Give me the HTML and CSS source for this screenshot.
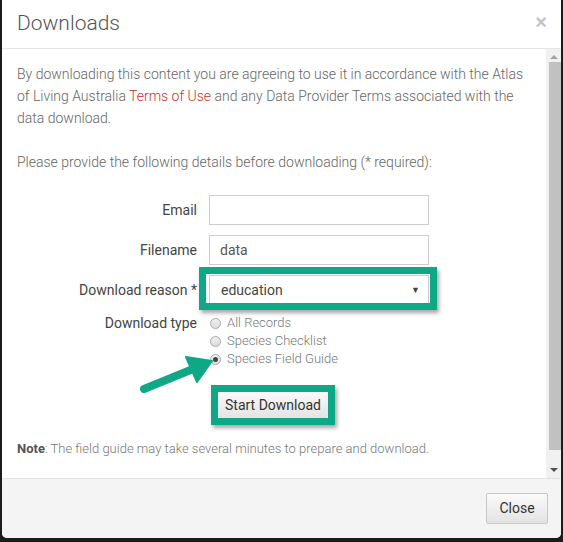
FILE: index.html
```html
<!DOCTYPE html>
<html>
<head>
<meta charset="utf-8">
<link rel="stylesheet" href="styles.css">
</head>
<body>
<div class="modal">
  <div class="modal-header">
    <h4 class="modal-title">Downloads</h4>
    <span class="close">&times;</span>
  </div>
  <div class="modal-middle">
    <div class="modal-body">
      <p class="intro">By downloading this content you are agreeing to use it in accordance with the Atlas of Living Australia <a href="#">Terms of Use</a> and any Data Provider Terms associated with the data download.</p>
      <p class="intro">Please provide the following details before downloading (* required):</p>
      <div class="form">
        <div class="row">
          <label class="lbl">Email</label>
          <div class="field"><input class="input" type="text" value=""></div>
        </div>
        <div class="row">
          <label class="lbl">Filename</label>
          <div class="field"><input class="input" type="text" value="data"></div>
        </div>
        <div class="row">
          <label class="lbl">Download reason *</label>
          <div class="field highlight">
            <div class="select"><span>education</span><span class="caret">&#9660;</span></div>
          </div>
        </div>
        <div class="row row-top">
          <label class="lbl">Download type</label>
          <div class="field radios">
            <div class="radio"><span class="dot"></span>All Records</div>
            <div class="radio"><span class="dot"></span>Species Checklist</div>
            <div class="radio"><span class="dot checked"></span>Species Field Guide</div>
            <svg class="arrow" width="80" height="42" viewBox="0 0 80 42">
              <path d="M5 35 L54 15" stroke="#0fa886" stroke-width="8" stroke-linecap="round" fill="none"/>
              <path d="M73 7 L47 3 L58 28 Z" fill="#0fa886" stroke="#0fa886" stroke-width="2" stroke-linejoin="round"/>
            </svg>
          </div>
        </div>
        <div class="row btn-row">
          <div class="lbl"></div>
          <div class="field">
            <span class="btn-box"><button class="btn">Start Download</button></span>
          </div>
        </div>
      </div>
      <p class="note"><b>Note</b>: The field guide may take several minutes to prepare and download.</p>
    </div>
    <div class="scrollbar">
      <span class="sb-arrow up"></span>
      <div class="sb-thumb"></div>
      <span class="sb-arrow down"></span>
    </div>
  </div>
  <div class="modal-footer">
    <button class="btn close-btn">Close</button>
  </div>
</div>
</body>
</html>
```

FILE: styles.css
```css
html, body {
  margin: 0;
  padding: 0;
}
body {
  background: #1c1c1c;
  font-family: Roboto, "Liberation Sans", sans-serif;
  width: 563px;
  height: 542px;
  overflow: hidden;
}
.modal {
  margin-left: 2px;
  width: 559px;
  height: 538px;
  background: #fff;
  border-radius: 0 0 5px 5px;
  display: flex;
  flex-direction: column;
  overflow: hidden;
}
.modal-header {
  height: 48px;
  border-bottom: 1px solid #e5e5e5;
  display: flex;
  align-items: center;
  justify-content: space-between;
  padding: 0 14px 0 15px;
  flex-shrink: 0;
}
.modal-title {
  margin: 0;
  font-size: 21px;
  font-weight: 300;
  color: #555;
  padding-bottom: 2px;
}
.close {
  font-size: 20px;
  color: #c4c4c4;
  font-weight: 700;
  margin-top: -4px;
  font-family: "Liberation Sans", sans-serif;
}
.modal-middle {
  flex: 1;
  display: flex;
  min-height: 0;
}
.modal-body {
  flex: 1;
  padding: 14px 8px 0 15px;
  font-size: 14px;
  line-height: 22px;
  color: #666;
  font-weight: 300;
}
.intro {
  margin: 0 0 22px;
}
.intro a {
  color: #c9302c;
  text-decoration: none;
}
.form {
  display: flex;
  flex-direction: column;
  gap: 10px;
  margin-top: 2px;
}
.row {
  display: flex;
  align-items: center;
  gap: 12px;
}
.row-top {
  align-items: flex-start;
}
.lbl {
  width: 180px;
  text-align: right;
  color: #444;
  font-size: 14px;
  font-weight: 400;
  flex-shrink: 0;
}
.row-top .lbl {
  line-height: 18px;
}
.field {
  width: 220px;
  position: relative;
}
.input {
  box-sizing: border-box;
  width: 220px;
  height: 30px;
  border: 1px solid #ccc;
  padding: 0 10px;
  font-family: Roboto, sans-serif;
  font-size: 14px;
  color: #555;
  outline: none;
  display: block;
}
.select {
  box-sizing: border-box;
  width: 220px;
  height: 29px;
  border: 1px solid #ccc;
  padding: 0 8px 0 11px;
  font-size: 14px;
  font-weight: 400;
  color: #444;
  display: flex;
  align-items: center;
  justify-content: space-between;
}
.caret {
  font-size: 9px;
  color: #444;
}
.highlight::after {
  content: "";
  position: absolute;
  left: -10px;
  top: -8px;
  right: -8px;
  bottom: -6px;
  border: 7px solid #0fa886;
  box-shadow: 2px 3px 4px rgba(0,0,0,0.35);
  pointer-events: none;
}
.radios {
  display: flex;
  flex-direction: column;
}
.radio {
  display: flex;
  align-items: center;
  height: 18px;
  font-size: 13px;
  color: #777;
  margin-left: 1px;
}
.dot {
  box-sizing: border-box;
  width: 11px;
  height: 11px;
  border-radius: 50%;
  border: 1px solid #aaa;
  background: linear-gradient(#f0f0f0, #dcdcdc);
  margin-right: 6px;
  display: inline-flex;
  align-items: center;
  justify-content: center;
}
.dot.checked::after {
  content: "";
  width: 5px;
  height: 5px;
  border-radius: 50%;
  background: #444;
}
.arrow {
  position: absolute;
  left: -70px;
  top: 40px;
}
.btn-row {
  margin-top: 7px;
}
.btn-box {
  display: inline-block;
  margin-left: 2px;
  border: 7px solid #0fa886;
  box-shadow: 2px 3px 4px rgba(0,0,0,0.35);
}
.btn {
  font-family: Roboto, sans-serif;
  font-size: 14px;
  color: #333;
  background: linear-gradient(#fafafa, #e3e3e3);
  border: 1px solid #c8c8c8;
  border-radius: 2px;
  display: block;
}
.btn-box .btn {
  height: 26px;
  padding: 0 7px;
  border: none;
}
.note {
  margin: 13px 0 0;
  font-size: 13px;
  color: #777;
}
.note b {
  color: #555;
  font-weight: 700;
}
.scrollbar {
  width: 15px;
  background: #f1f1f1;
  display: flex;
  flex-direction: column;
  align-items: center;
  flex-shrink: 0;
}
.sb-thumb {
  width: 12px;
  margin-left: 2px;
  height: 388px;
  background: #c1c1c1;
  margin-top: 3px;
}
.sb-arrow {
  width: 0;
  height: 0;
  border-left: 4px solid transparent;
  border-right: 4px solid transparent;
}
.sb-arrow.up {
  border-bottom: 4px solid #a3a3a3;
  margin-top: 6px;
}
.sb-arrow.down {
  border-top: 4px solid #505050;
  margin-top: auto;
  margin-bottom: 6px;
}
.modal-footer {
  height: 59px;
  flex-shrink: 0;
  background: #f4f4f4;
  border-top: 1px solid #e2e2e2;
  display: flex;
  align-items: center;
  justify-content: flex-end;
  padding-right: 13px;
}
.close-btn {
  height: 31px;
  width: 62px;
  font-size: 14px;
  color: #333;
  margin-top: -1px;
}
```
